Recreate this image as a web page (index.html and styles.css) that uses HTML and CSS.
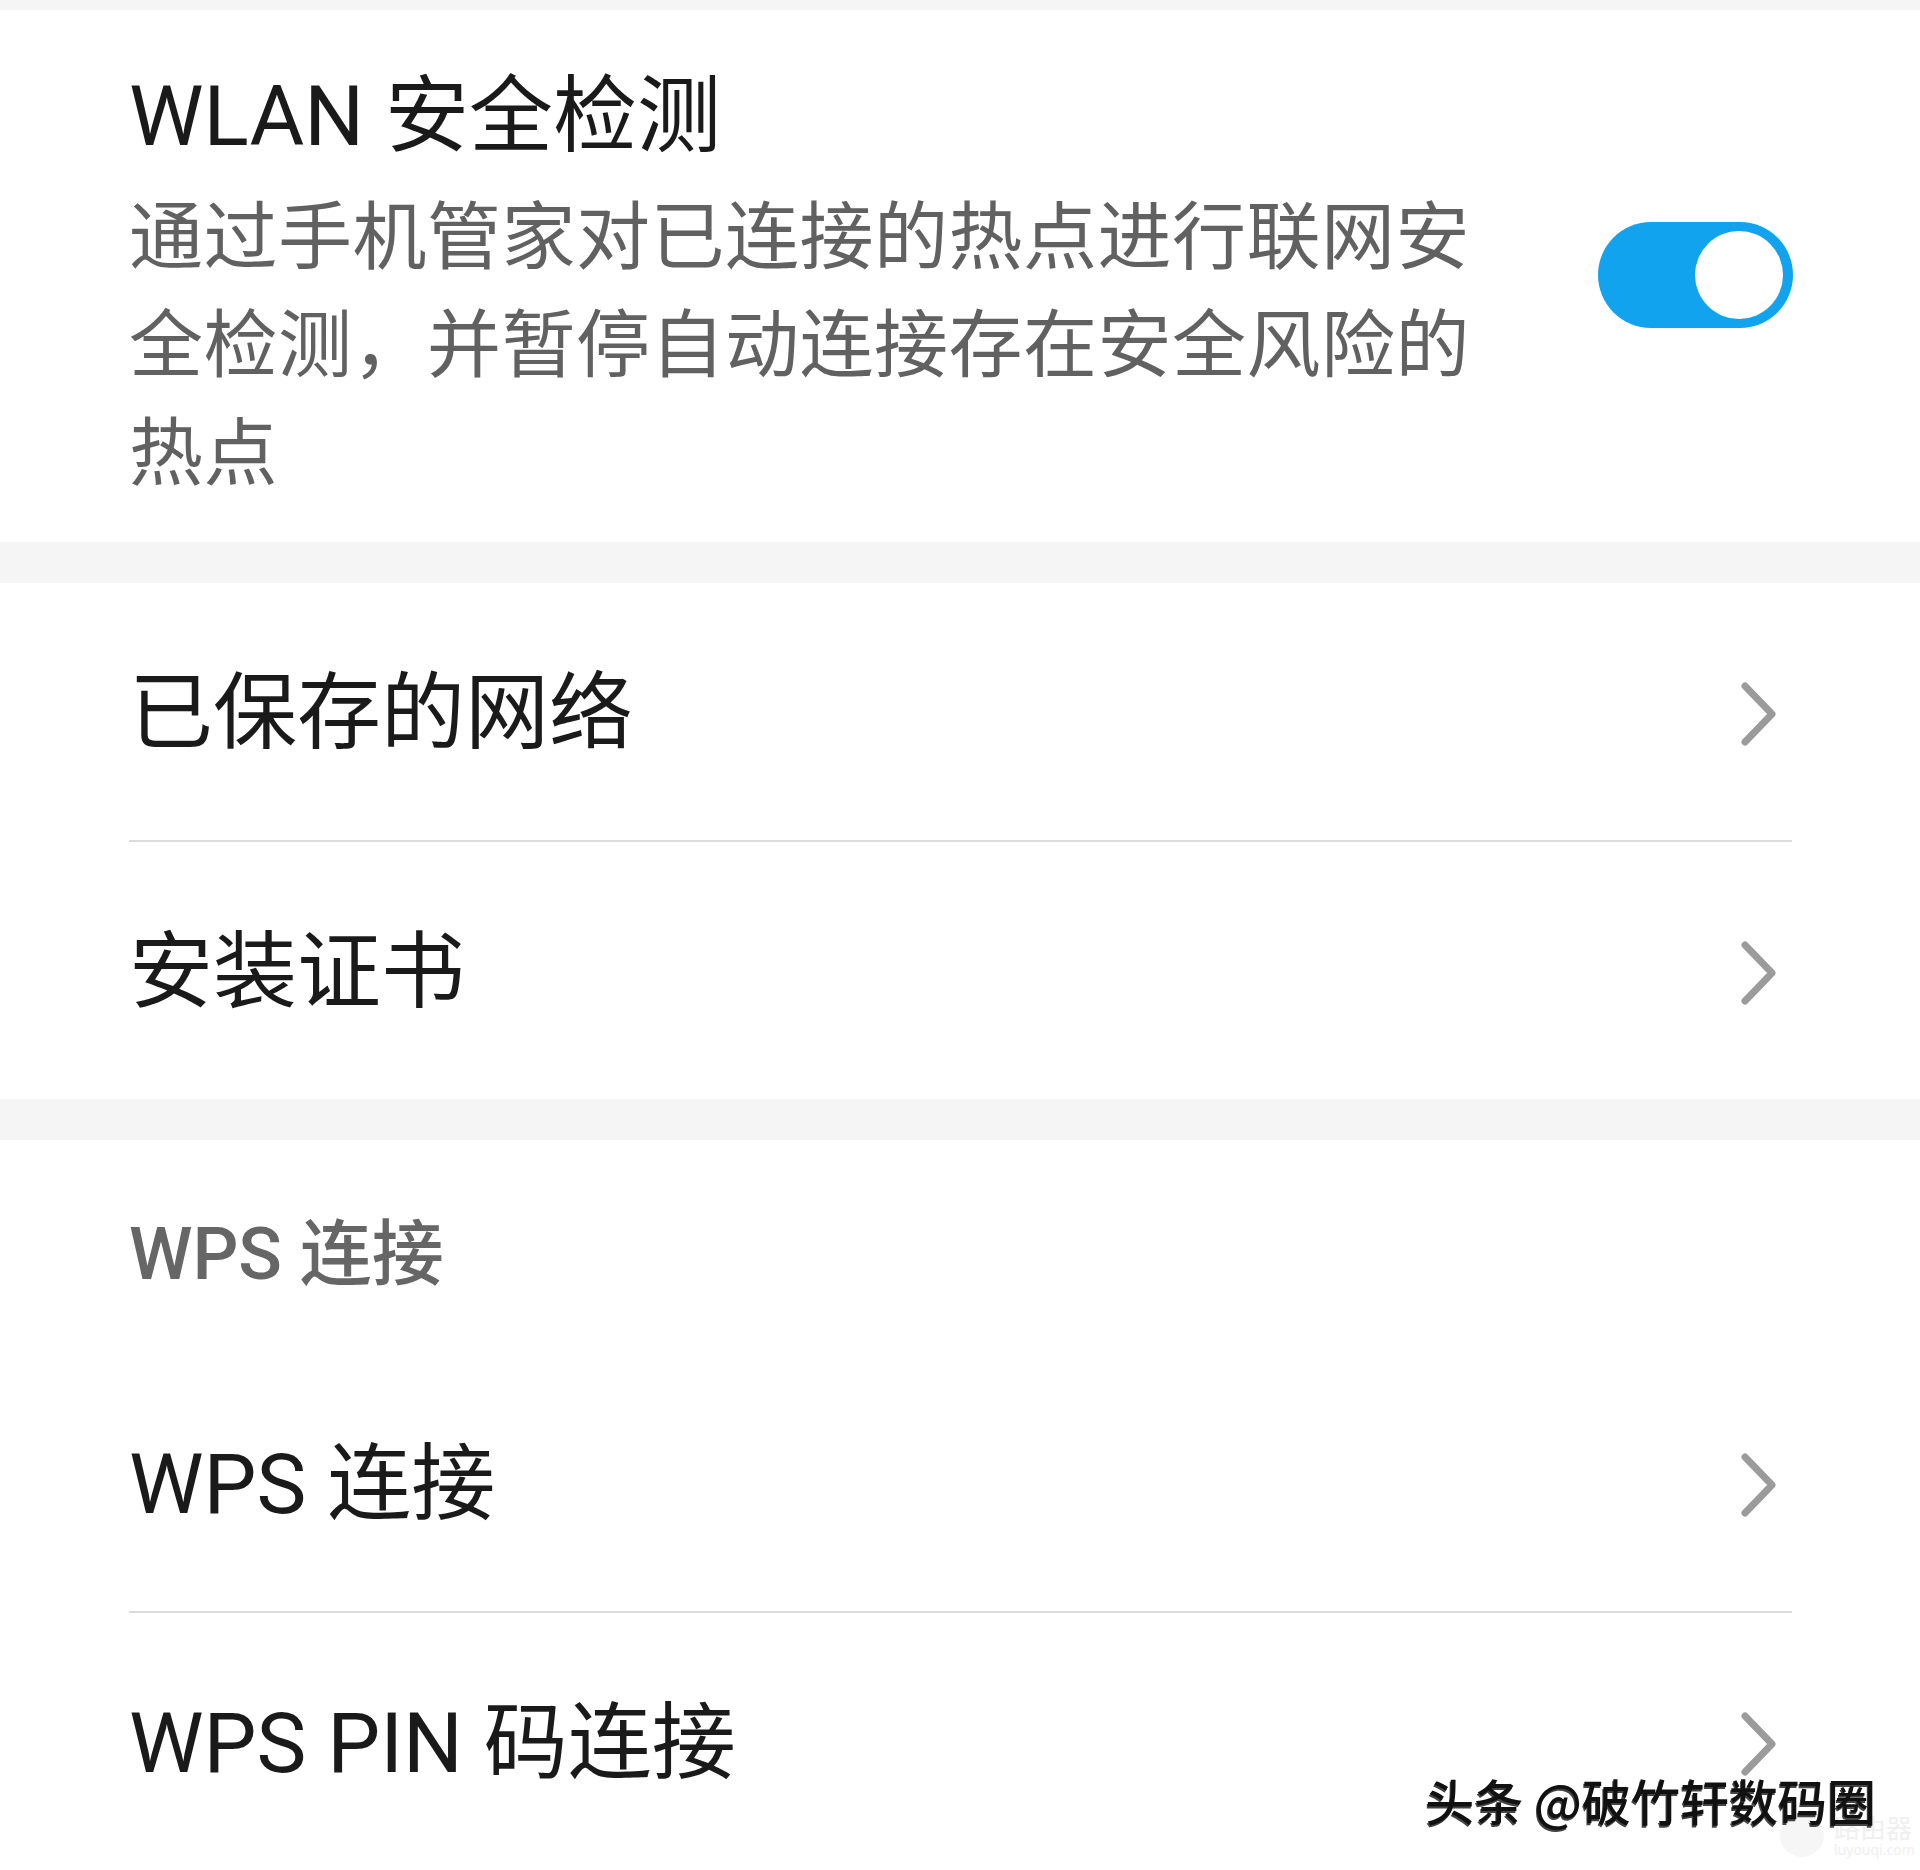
FILE: index.html
```html
<!DOCTYPE html>
<html lang="zh-CN">
<head>
<meta charset="utf-8">
<title>WLAN 高级设置</title>
<link rel="stylesheet" href="styles.css">
</head>
<body>
<div class="page">
  <div class="band band-top"></div>

  <section class="card security">
    <div class="security-text">
      <div class="title">WLAN 安全检测</div>
      <div class="desc">通过手机管家对已连接的热点进行联网安全检测，并暂停自动连接存在安全风险的热点</div>
    </div>
    <div class="toggle"><span class="knob"></span></div>
  </section>

  <div class="band"></div>

  <section class="card">
    <div class="row with-line">
      <span class="row-label">已保存的网络</span>
      <svg class="chev" viewBox="0 0 36 64" width="36" height="64"><polyline points="4,4 31,32 4,60"/></svg>
    </div>
    <div class="row">
      <span class="row-label">安装证书</span>
      <svg class="chev" viewBox="0 0 36 64" width="36" height="64"><polyline points="4,4 31,32 4,60"/></svg>
    </div>
  </section>

  <div class="band"></div>

  <section class="card">
    <div class="group-head">WPS 连接</div>
    <div class="row with-line">
      <span class="row-label">WPS 连接</span>
      <svg class="chev" viewBox="0 0 36 64" width="36" height="64"><polyline points="4,4 31,32 4,60"/></svg>
    </div>
    <div class="row">
      <span class="row-label">WPS PIN 码连接</span>
      <svg class="chev" viewBox="0 0 36 64" width="36" height="64"><polyline points="4,4 31,32 4,60"/></svg>
    </div>
  </section>

  <div class="site-mark">
    <span class="site-dot"></span>
    <span class="site-text"><span class="site-cn">路由器</span><span class="site-en">luyouqi.com</span></span>
  </div>
  <div class="watermark">头条 @破竹轩数码圈</div>
</div>
</body>
</html>
```

FILE: styles.css
```css
html, body {
  margin: 0;
  padding: 0;
  background: #ffffff;
}

body {
  width: 1920px;
  height: 1870px;
  overflow: hidden;
  font-family: Roboto, "Noto Sans CJK SC", "Noto Sans", sans-serif;
  color: #1a1a1a;
}

.page {
  position: relative;
  width: 1920px;
  height: 1870px;
  display: flex;
  flex-direction: column;
}

.band {
  height: 41px;
  background: #f5f5f5;
  flex: none;
}

.band-top {
  height: 10px;
}

.card {
  background: #ffffff;
  flex: none;
}

/* WLAN security block */
.security {
  display: flex;
  align-items: flex-start;
  padding: 57px 127px 34px 129px;
}

.security-text {
  flex: 1;
}

.title {
  font-size: 84px;
  line-height: 100px;
  color: #1a1a1a;
}

.desc {
  margin-top: 17px;
  max-width: 1370px;
  font-size: 74px;
  line-height: 108px;
  letter-spacing: 0.5px;
  color: #616161;
}

.toggle {
  flex: none;
  margin-top: 155px;
  width: 195px;
  height: 106px;
  box-sizing: border-box;
  border-radius: 53px;
  background: #12a3ee;
  padding: 9px 10px;
  display: flex;
  justify-content: flex-end;
}

.knob {
  width: 88px;
  height: 88px;
  border-radius: 50%;
  background: #ffffff;
}

/* list rows */
.row {
  display: flex;
  align-items: center;
  justify-content: space-between;
  height: 257px;
  box-sizing: border-box;
  margin: 0 128px 0 129px;
  padding: 4px 15px 0 0;
}

.row.with-line {
  border-bottom: 2px solid #dcdcdc;
  height: 259px;
}

.row-label {
  font-size: 84px;
  line-height: 100px;
  color: #1a1a1a;
}

.chev {
  flex: none;
  display: block;
}

.chev polyline {
  fill: none;
  stroke: #9b9b9b;
  stroke-width: 7;
  stroke-linecap: round;
  stroke-linejoin: round;
}

.group-head {
  height: 214px;
  box-sizing: border-box;
  padding: 65px 0 0 129px;
  font-size: 72px;
  line-height: 100px;
  font-weight: 500;
  color: #666666;
}

/* overlays */
.watermark {
  position: absolute;
  right: 44px;
  top: 1770px;
  font-family: "Noto Sans CJK SC", sans-serif;
  font-size: 49px;
  line-height: 60px;
  font-weight: 500;
  color: #111111;
  text-shadow: -1px 2px 0 #444444;
}

.site-mark {
  position: absolute;
  left: 1780px;
  top: 1812px;
  display: flex;
  align-items: center;
  gap: 10px;
  opacity: 0.5;
}

.site-dot {
  width: 44px;
  height: 44px;
  border-radius: 50%;
  background: #eeeeee;
}

.site-text {
  display: flex;
  flex-direction: column;
  line-height: 1;
  color: #e2e2e2;
}

.site-cn {
  font-family: "Noto Sans CJK SC", sans-serif;
  font-size: 26px;
  line-height: 30px;
}

.site-en {
  font-family: "Noto Sans", sans-serif;
  font-size: 14px;
  line-height: 16px;
}
```
